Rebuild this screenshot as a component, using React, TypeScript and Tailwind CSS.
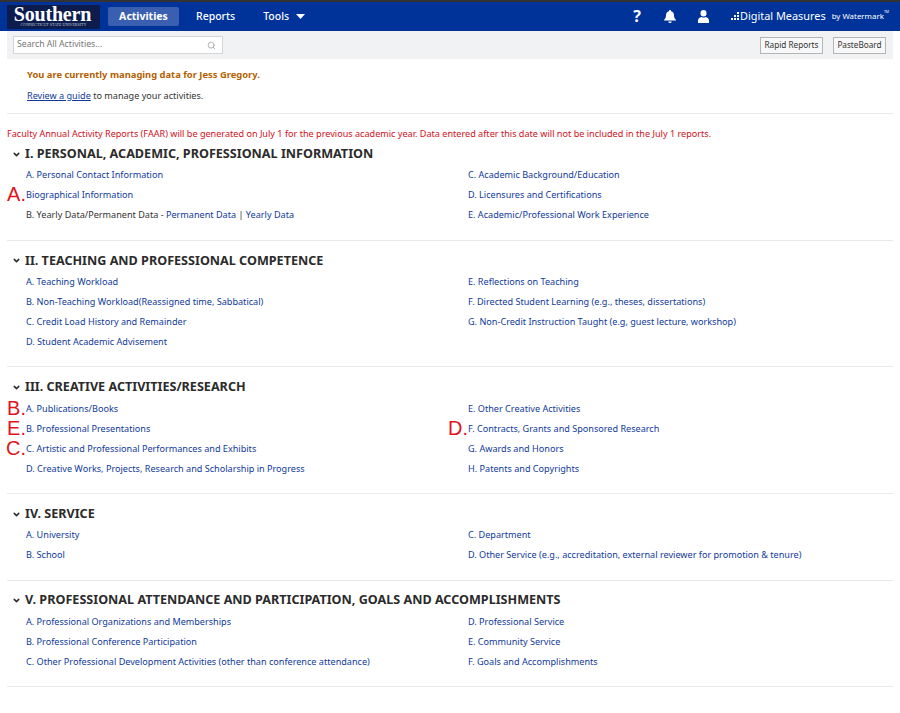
import { ChevronDown, Search } from 'lucide-react';

type Item = { label: string; mark?: string; plain?: boolean };

const sections: { title: string; left: Item[]; right: Item[] }[] = [
  {
    title: 'I. PERSONAL, ACADEMIC, PROFESSIONAL INFORMATION',
    left: [
      { label: 'A. Personal Contact Information' },
      { label: 'Biographical Information', mark: 'A.' },
      { label: 'B. Yearly Data/Permanent Data', plain: true },
    ],
    right: [
      { label: 'C. Academic Background/Education' },
      { label: 'D. Licensures and Certifications' },
      { label: 'E. Academic/Professional Work Experience' },
    ],
  },
  {
    title: 'II. TEACHING AND PROFESSIONAL COMPETENCE',
    left: [
      { label: 'A. Teaching Workload' },
      { label: 'B. Non-Teaching Workload(Reassigned time, Sabbatical)' },
      { label: 'C. Credit Load History and Remainder' },
      { label: 'D. Student Academic Advisement' },
    ],
    right: [
      { label: 'E. Reflections on Teaching' },
      { label: 'F. Directed Student Learning (e.g., theses, dissertations)' },
      { label: 'G. Non-Credit Instruction Taught (e.g, guest lecture, workshop)' },
    ],
  },
  {
    title: 'III. CREATIVE ACTIVITIES/RESEARCH',
    left: [
      { label: 'A. Publications/Books', mark: 'B.' },
      { label: 'B. Professional Presentations', mark: 'E.' },
      { label: 'C. Artistic and Professional Performances and Exhibits', mark: 'C.' },
      { label: 'D. Creative Works, Projects, Research and Scholarship in Progress' },
    ],
    right: [
      { label: 'E. Other Creative Activities' },
      { label: 'F. Contracts, Grants and Sponsored Research', mark: 'D.' },
      { label: 'G. Awards and Honors' },
      { label: 'H. Patents and Copyrights' },
    ],
  },
  {
    title: 'IV. SERVICE',
    left: [{ label: 'A. University' }, { label: 'B. School' }],
    right: [
      { label: 'C. Department' },
      { label: 'D. Other Service (e.g., accreditation, external reviewer for promotion & tenure)' },
    ],
  },
  {
    title: 'V. PROFESSIONAL ATTENDANCE AND PARTICIPATION, GOALS AND ACCOMPLISHMENTS',
    left: [
      { label: 'A. Professional Organizations and Memberships' },
      { label: 'B. Professional Conference Participation' },
      { label: 'C. Other Professional Development Activities (other than conference attendance)' },
    ],
    right: [
      { label: 'D. Professional Service' },
      { label: 'E. Community Service' },
      { label: 'F. Goals and Accomplishments' },
    ],
  },
];

function Row({ item }: { item: Item }) {
  return (
    <div className="relative h-5 leading-5 whitespace-nowrap">
      {item.mark && (
        <span className="absolute right-full top-[-1px] text-[20px] leading-[20px] text-[#e0141c] font-['Liberation_Sans',sans-serif]">
          {item.mark}
        </span>
      )}
      {item.plain ? (
        <span className="text-[#333]">
          {item.label} - <a className="text-[#0f3a9a]">Permanent Data</a> | <a className="text-[#0f3a9a]">Yearly Data</a>
        </span>
      ) : (
        <a className="text-[#0f3a9a]">{item.label}</a>
      )}
    </div>
  );
}

function Section({ title, left, right }: (typeof sections)[number]) {
  return (
    <section className="mx-[7px] border-b border-[#e8e9ea] pt-[10.2px] pb-[14.4px]">
      <h2 className="flex h-5 items-center text-[12.6px] font-bold text-[#2b2b2b]">
        <ChevronDown className="ml-[5px] mr-[4px] h-[9px] w-[9px]" strokeWidth={4} />
        {title}
      </h2>
      <div className="mt-[1px] grid grid-cols-[442px_1fr] pl-[19px]">
        <div>
          {left.map((item) => (
            <Row key={item.label} item={item} />
          ))}
        </div>
        <div>
          {right.map((item) => (
            <Row key={item.label} item={item} />
          ))}
        </div>
      </div>
    </section>
  );
}

export default function App() {
  return (
    <div className="min-h-[713px] bg-white font-['Noto_Sans',sans-serif] text-[9.1px] text-[#333]">
      <div className="h-[2px] bg-[#333]" />
      <header className="flex h-[29px] items-center bg-[#003399] text-white">
        <div className="ml-[7px] flex h-[24px] w-[93px] flex-col items-center justify-center bg-[#0b1c4d] leading-none">
          <span className="-ml-[2px] font-['Liberation_Serif',serif] text-[20px] leading-[16px] font-bold tracking-[-0.2px]">Southern</span>
          <span className="mt-[1px] font-['Liberation_Serif',serif] text-[4px] leading-[4px] text-[#c9cfdd]">CONNECTICUT STATE UNIVERSITY</span>
        </div>
        <nav className="ml-2 flex items-center text-[10.5px]">
          <span className="flex h-[19px] w-[71px] items-center justify-center rounded-[2px] bg-[#3a5eb0] font-bold">Activities</span>
          <span className="ml-[17px] font-medium">Reports</span>
          <span className="ml-[28px] flex items-center font-medium">
            Tools
            <svg className="ml-[7px] h-[5px] w-[9px]" viewBox="0 0 9 5"><path d="M0 0h9L4.5 5z" fill="#fff" /></svg>
          </span>
        </nav>
        <div className="ml-auto flex items-center pr-[11px]">
          <span className="mr-[23px] text-[16px] font-bold leading-none">?</span>
          <svg className="mr-[22px] h-[13px] w-[12px]" viewBox="0 0 12 13" fill="#fff">
            <path d="M6 0a1 1 0 0 1 1 1.2c2 .5 3 2 3 4 0 2.300.7 3.500 2 4.800v.5H0V10c1.300-1.300 2-2.500 2-4.800 0-2 1-3.500 3-4A1 1 0 0 1 6 0z" />
            <path d="M4.300 11.500h3.400a1.700 1.500 0 0 1-3.400 0z" />
          </svg>
          <svg className="mr-[22px] h-[13px] w-[11px]" viewBox="0 0 11 13" fill="#fff">
            <ellipse cx="5.500" cy="3.200" rx="3" ry="3.200" />
            <path d="M0 13v-2.500C0 8.500 1.800 7.300 3.300 7c1.300.7 3.100.7 4.400 0C9.200 7.300 11 8.500 11 10.500V13z" />
          </svg>
          <svg className="h-[8px] w-[9px]" viewBox="0 0 9 8" fill="#fff">
            <rect x="0" y="6" width="2" height="2" />
            <rect x="3" y="6" width="2" height="2" />
            <rect x="6" y="6" width="2" height="2" />
            <rect x="3" y="3" width="2" height="2" />
            <rect x="6" y="3" width="2" height="2" />
            <rect x="6" y="0" width="2" height="2" />
          </svg>
          <span className="text-[10.9px] font-normal">Digital Measures</span>
          <span className="ml-[6px] text-[7.9px]">by Watermark</span>
          <span className="self-start text-[3.5px] leading-[8px]">TM</span>
        </div>
      </header>
      <div className="mx-[7px] flex h-[28px] items-center justify-between bg-[#f1f2f3] pl-[6px] pr-[7px]">
        <div className="flex h-[18px] w-[210px] items-center justify-between border border-[#d4d5d6] bg-white pl-[3px] pr-[6px] text-[8.7px] text-[#777]">
          Search All Activities...
          <Search className="h-[9px] w-[9px] text-[#999]" strokeWidth={2} />
        </div>
        <div className="flex gap-[10px] text-[8.2px]">
          <span className="flex h-[17px] w-[63px] items-center justify-center border border-[#b4b5b6] bg-[#f8f8f8]">Rapid Reports</span>
          <span className="flex h-[17px] w-[53px] items-center justify-center border border-[#b4b5b6] bg-[#f8f8f8]">PasteBoard</span>
        </div>
      </div>
      <div className="mx-[7px] h-[55px] border-b border-[#e8e9ea] pl-[20px] pt-[6px]">
        <p className="h-[21px] text-[9.4px] leading-[20px] font-bold text-[#b25f00]">You are currently managing data for Jess Gregory.</p>
        <p className="leading-[20px]">
          <a className="text-[#0f3a9a] underline">Review a guide</a> to manage your activities.
        </p>
      </div>
      <p className="mt-[10px] ml-[7px] h-[20px] leading-[20px] text-[#d0101c]">
        Faculty Annual Activity Reports (FAAR) will be generated on July 1 for the previous academic year. Data entered after this date will not be included in the July 1 reports.
      </p>
      <div className="-mt-[9.8px]">
        {sections.map((s) => (
          <Section key={s.title} {...s} />
        ))}
      </div>
    </div>
  );
}
